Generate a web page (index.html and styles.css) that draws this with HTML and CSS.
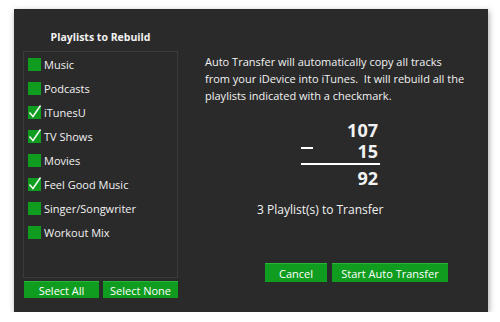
FILE: index.html
```html
<!DOCTYPE html>
<html lang="en">
<head>
    <meta charset="UTF-8">
    <title>Auto Transfer</title>
    <link rel="stylesheet" href="styles.css">
</head>
<body>
    <div class="dialog">
        <div class="left">
            <h3 class="title">Playlists to Rebuild</h3>
            <div class="list">
                <div class="item"><span class="box"></span>Music</div>
                <div class="item"><span class="box"></span>Podcasts</div>
                <div class="item"><span class="box checked"><svg viewBox="0 0 13 13"><path d="M1.5 7.5 L5 11.5 L12.5 0.5"/></svg></span>iTunesU</div>
                <div class="item"><span class="box checked"><svg viewBox="0 0 13 13"><path d="M1.5 7.5 L5 11.5 L12.5 0.5"/></svg></span>TV Shows</div>
                <div class="item"><span class="box"></span>Movies</div>
                <div class="item"><span class="box checked"><svg viewBox="0 0 13 13"><path d="M1.5 7.5 L5 11.5 L12.5 0.5"/></svg></span>Feel Good Music</div>
                <div class="item"><span class="box"></span>Singer/Songwriter</div>
                <div class="item"><span class="box"></span>Workout Mix</div>
            </div>
            <div class="select-buttons">
                <button class="btn small">Select All</button>
                <button class="btn small">Select None</button>
            </div>
        </div>

        <div class="right">
            <p class="info">Auto Transfer will automatically copy all tracks<br>from your iDevice into iTunes.&nbsp; It will rebuild all the<br>playlists indicated with a checkmark.</p>

            <div class="calc">
                <div class="row">107</div>
                <div class="row"><span class="minus"></span>15</div>
                <div class="rule"></div>
                <div class="row">92</div>
            </div>

            <p class="count">3 Playlist(s) to Transfer</p>

            <div class="actions">
                <button class="btn">Cancel</button>
                <button class="btn wide">Start Auto Transfer</button>
            </div>
        </div>
    </div>
</body>
</html>
```

FILE: styles.css
```css
:root {
    --bg: #2a2a2a;
    --border: #3b3b3b;
    --green: #0f9c1f;
    --green-top: #2bb43a;
    --text: #f2f2f2;
}

body {
    margin: 0;
    background: #fff;
    font-family: "Open Sans", "Noto Sans", sans-serif;
    color: var(--text);
}

.dialog {
    margin: 9px 0 0 14px;
    width: 474px;
    height: 303px;
    background: var(--bg);
    display: flex;
    box-shadow: 1px 2px 6px rgba(0, 0, 0, 0.35);
}

.left {
    padding: 20px 0 0 9px;
    width: 155px;
}

.title {
    margin: 0;
    font-size: 10.5px;
    font-weight: 700;
    line-height: 16px;
    text-align: center;
}

.list {
    margin-top: 6px;
    height: 225px;
    border: 1px solid var(--border);
    padding-left: 4px;
}

.item {
    display: flex;
    align-items: center;
    height: 24px;
    font-size: 11px;
}

.box {
    width: 13px;
    height: 13px;
    background: var(--green);
    margin-right: 3px;
    position: relative;
}

.box svg {
    position: absolute;
    left: 0;
    top: -1px;
    width: 13px;
    height: 13px;
    overflow: visible;
}

.box path {
    fill: none;
    stroke: #fff;
    stroke-width: 1.4;
}

.select-buttons {
    display: flex;
    gap: 4px;
    margin-top: 3px;
    padding-left: 1px;
}

.btn {
    background: var(--green);
    border: none;
    border-top: 1px solid var(--green-top);
    color: #fff;
    font-family: inherit;
    font-size: 11px;
    padding: 0;
    height: 19px;
    width: 62px;
    line-height: 17px;
}

.btn.small {
    width: 75px;
    height: 17px;
    line-height: 15px;
}

.btn.wide {
    width: 116px;
}

.right {
    padding: 44px 0 0 27px;
}

.info {
    margin: 0;
    white-space: nowrap;
    font-size: 11px;
    line-height: 17px;
}

.calc {
    margin: 16px 0 0 96px;
    width: 79px;
    font-size: 18px;
    font-weight: 700;
}

.row {
    height: 21px;
    line-height: 21px;
    text-align: right;
    padding-right: 2px;
    position: relative;
}

.minus {
    position: absolute;
    left: 0;
    top: 6px;
    width: 12px;
    height: 2px;
    background: #fff;
}

.rule {
    margin: 1px 0 3px;
    height: 2px;
    background: #fff;
}

.count {
    margin: 12px 0 0 52px;
    font-size: 12px;
    line-height: 18px;
}

.actions {
    display: flex;
    gap: 5px;
    margin: 44px 0 0 60px;
}
```
